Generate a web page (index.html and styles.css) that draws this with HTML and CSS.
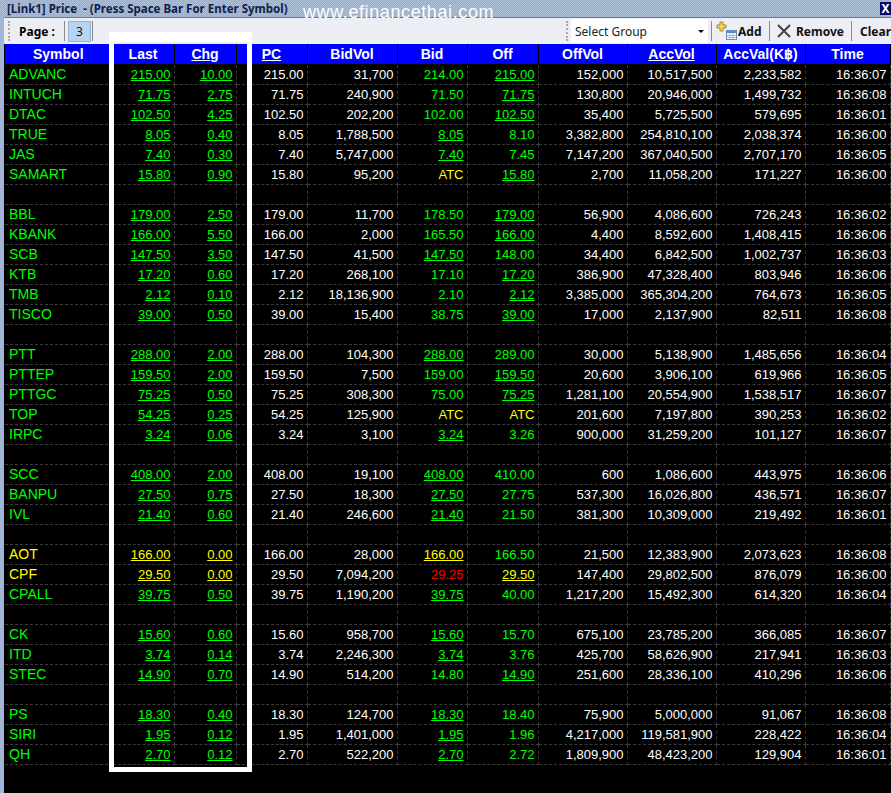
FILE: index.html
```html
<!DOCTYPE html>
<html lang="en">
<head>
    <meta charset="UTF-8">
    <title>Price</title>
    <link rel="stylesheet" href="styles.css">
</head>
<body>
    <div class="window">
        <div class="titlebar">
            <span class="title">[Link1] Price &nbsp;- (Press Space Bar For Enter Symbol)</span>
            <span class="close">X</span>
        </div>
        <div class="toolbar">
            <span class="grip"></span>
            <span class="page-label">Page :</span>
            <span class="sep"></span>
            <span class="page-num">3</span>
            <span class="sep sep-tight"></span>
            <span class="spacer"></span>
            <span class="grip grip-right"></span>
            <span class="group-select"><span>Select Group</span><span class="caret"></span></span>
            <span class="sep"></span>
            <span class="tool tool-add">
                <svg width="22" height="20" viewBox="0 0 22 20">
                    <path d="M4 1h3v3h3v3H7v3H4V7H1V4h3z" fill="#f3d65a" stroke="#a8892a"/>
                    <rect x="10.5" y="9.5" width="10" height="9" fill="#fff" stroke="#6b8fc0"/>
                    <rect x="11" y="10" width="9" height="2" fill="#5d86c4"/>
                    <path d="M11 14.5h9M11 16.5h9M14 12v6M17 12v6" stroke="#9db6d8" fill="none"/>
                </svg>
                Add
            </span>
            <span class="sep"></span>
            <span class="tool tool-remove">
                <svg width="16" height="16" viewBox="0 0 16 16">
                    <path d="M2 2l12 12M14 2L2 14" stroke="#444" stroke-width="2" fill="none"/>
                </svg>
                Remove
            </span>
            <span class="sep"></span>
            <span class="tool tool-clear">Clear</span>
        </div>
        <div class="grid-wrap">
            <table class="grid">
                <thead id="head"></thead>
                <tbody id="rows"></tbody>
            </table>
        </div>
    </div>
    <div class="watermark">www.efinancethai.com</div>
    <div class="highlight"></div>
    <script src="app.js"></script>
</body>
</html>
```

FILE: styles.css
```css
html, body {
    margin: 0;
    padding: 0;
    background: #000;
}
body {
    width: 891px;
    height: 793px;
    overflow: hidden;
    position: relative;
    font-family: "Liberation Sans", Arial, sans-serif;
}
.window {
    height: 793px;
    display: flex;
    flex-direction: column;
    background: #000;
    border-left: 4px solid #a3b5d6;
}
.titlebar {
    height: 17px;
    margin-left: -4px;
    padding-left: 7px;
    display: flex;
    align-items: center;
    justify-content: space-between;
    background: repeating-conic-gradient(#98abd0 0 25%, #aebfd8 0 50%) 0 0 / 2px 2px;
    font-family: "Noto Sans", sans-serif;
    font-size: 11.5px;
    font-weight: bold;
    color: #10204a;
}
.close {
    width: 11px;
    height: 13px;
    background: #0a0a6e;
    color: #fff;
    font-size: 12px;
    line-height: 13px;
    text-align: center;
    overflow: hidden;
}
.toolbar {
    height: 26px;
    display: flex;
    align-items: center;
    border-top: 1px solid #6f7b8c;
    background: repeating-conic-gradient(#f6f5f2 0 25%, #e6e8ee 0 50%) 0 0 / 2px 2px;
    font-family: "Noto Sans", sans-serif;
    font-size: 12px;
    color: #000;
}
.grip {
    width: 2px;
    height: 20px;
    margin: 0 5px 0 4px;
    border-left: 2px dotted #a9a9a9;
}
.page-label {
    width: 42px;
    margin-left: 2px;
    font-weight: bold;
}
.sep {
    width: 1px;
    height: 20px;
    margin: 0 3px;
    background: #8a8a8a;
    flex: none;
}
.sep-tight {
    margin-left: 1px;
}
.page-num {
    width: 23px;
    height: 21px;
    line-height: 19px;
    text-align: center;
    background: #b9d4f0;
    border: 1px solid #8db2dc;
    box-sizing: border-box;
    color: #111;
}
.spacer {
    flex: 1;
}
.grip-right {
    margin: 0 1px 0 0;
}
.group-select {
    width: 137px;
    height: 24px;
    padding: 0 4px 0 4px;
    box-sizing: border-box;
    display: flex;
    align-items: center;
    justify-content: space-between;
    background: #fff;
    color: #222;
}
.caret {
    border: 3px solid transparent;
    border-top: 3px solid #000;
    margin-top: 3px;
}
.tool {
    display: flex;
    align-items: center;
    font-weight: bold;
    color: #111;
}
.tool-add {
    width: 50px;
    gap: 0;
    margin-left: 1px;
}
.tool-remove {
    width: 72px;
    gap: 4px;
    margin-left: 3px;
}
.tool-clear {
    margin-left: 5px;
}
.grid-wrap {
    padding: 0 0 0 1px;
}
.grid {
    border-collapse: collapse;
    table-layout: fixed;
    width: 885px;
    font-size: 13px;
    color: #fff;
}
.grid th {
    height: 20px;
    padding: 0;
    background: #0000ff;
    color: #fff;
    font-size: 14px;
    font-weight: bold;
    text-align: center;
    border-right: 1px solid #000;
    border-bottom: 1px solid #000;
    box-sizing: border-box;
}
.grid td {
    height: 20px;
    padding: 0 3px 0 0;
    text-align: right;
    white-space: nowrap;
    box-sizing: border-box;
    border-right: 1px dashed #3a3a3a;
    border-bottom: 1px dashed #3a3a3a;
}
.grid td:first-child {
    padding: 0 0 0 4px;
    text-align: left;
    font-size: 14px;
}
.link {
    text-decoration: underline;
}
.green { color: #00ff00; }
.yellow { color: #ffff00; }
.red { color: #ff0000; }
.sort {
    text-decoration: underline;
}
.watermark {
    position: absolute;
    left: 303px;
    top: 2px;
    font-size: 18px;
    letter-spacing: 0.6px;
    color: #fff;
}
.highlight {
    position: absolute;
    left: 109px;
    top: 32px;
    width: 143px;
    height: 740px;
    box-sizing: border-box;
    border: 5px solid #fff;
    border-top-width: 10px;
}
```

FILE: app.js
```js
const columns = [
    ['Symbol', 107], ['Last', 62], ['Chg', 62, true], ['PC', 71, true], ['BidVol', 90],
    ['Bid', 70], ['Off', 71], ['OffVol', 89], ['AccVol', 89, true], ['AccVal(K฿)', 89], ['Time', 85]
];

// symbol, last, chg, pc, bidvol, bid, off, offvol, accvol, accval, time
const data = [
    'ADVANC|215.00|10.00|215.00|31,700|214.00|*215.00|152,000|10,517,500|2,233,582|16:36:07',
    'INTUCH|71.75|2.75|71.75|240,900|71.50|*71.75|130,800|20,946,000|1,499,732|16:36:08',
    'DTAC|102.50|4.25|102.50|202,200|102.00|*102.50|35,400|5,725,500|579,695|16:36:01',
    'TRUE|8.05|0.40|8.05|1,788,500|*8.05|8.10|3,382,800|254,810,100|2,038,374|16:36:00',
    'JAS|7.40|0.30|7.40|5,747,000|*7.40|7.45|7,147,200|367,040,500|2,707,170|16:36:05',
    'SAMART|15.80|0.90|15.80|95,200|ATC|*15.80|2,700|11,058,200|171,227|16:36:00',
    '',
    'BBL|179.00|2.50|179.00|11,700|178.50|*179.00|56,900|4,086,600|726,243|16:36:02',
    'KBANK|166.00|5.50|166.00|2,000|165.50|*166.00|4,400|8,592,600|1,408,415|16:36:06',
    'SCB|147.50|3.50|147.50|41,500|*147.50|148.00|34,400|6,842,500|1,002,737|16:36:03',
    'KTB|17.20|0.60|17.20|268,100|17.10|*17.20|386,900|47,328,400|803,946|16:36:06',
    'TMB|2.12|0.10|2.12|18,136,900|2.10|*2.12|3,385,000|365,304,200|764,673|16:36:05',
    'TISCO|39.00|0.50|39.00|15,400|38.75|*39.00|17,000|2,137,900|82,511|16:36:08',
    '',
    'PTT|288.00|2.00|288.00|104,300|*288.00|289.00|30,000|5,138,900|1,485,656|16:36:04',
    'PTTEP|159.50|2.00|159.50|7,500|159.00|*159.50|20,600|3,906,100|619,966|16:36:05',
    'PTTGC|75.25|0.50|75.25|308,300|75.00|*75.25|1,281,100|20,554,900|1,538,517|16:36:07',
    'TOP|54.25|0.25|54.25|125,900|ATC|ATC|201,600|7,197,800|390,253|16:36:02',
    'IRPC|3.24|0.06|3.24|3,100|*3.24|3.26|900,000|31,259,200|101,127|16:36:07',
    '',
    'SCC|408.00|2.00|408.00|19,100|*408.00|410.00|600|1,086,600|443,975|16:36:06',
    'BANPU|27.50|0.75|27.50|18,300|*27.50|27.75|537,300|16,026,800|436,571|16:36:07',
    'IVL|21.40|0.60|21.40|246,600|*21.40|21.50|381,300|10,309,000|219,492|16:36:01',
    '',
    'AOT|166.00|0.00|166.00|28,000|y166.00|166.50|21,500|12,383,900|2,073,623|16:36:08',
    'CPF|29.50|0.00|29.50|7,094,200|r29.25|y29.50|147,400|29,802,500|876,079|16:36:00',
    'CPALL|39.75|0.50|39.75|1,190,200|*39.75|40.00|1,217,200|15,492,300|614,320|16:36:04',
    '',
    'CK|15.60|0.60|15.60|958,700|*15.60|15.70|675,100|23,785,200|366,085|16:36:07',
    'ITD|3.74|0.14|3.74|2,246,300|*3.74|3.76|425,700|58,626,900|217,941|16:36:03',
    'STEC|14.90|0.70|14.90|514,200|14.80|*14.90|251,600|28,336,100|410,296|16:36:06',
    '',
    'PS|18.30|0.40|18.30|124,700|*18.30|18.40|75,900|5,000,000|91,067|16:36:08',
    'SIRI|1.95|0.12|1.95|1,401,000|*1.95|1.96|4,217,000|119,581,900|228,422|16:36:04',
    'QH|2.70|0.12|2.70|522,200|*2.70|2.72|1,809,900|48,423,200|129,904|16:36:01'
];

const yellowSymbols = ['AOT', 'CPF'];

document.getElementById('head').innerHTML = '<tr>' + columns.map(c =>
    `<th style="width:${c[1]}px">${c[2] ? `<span class="sort">${c[0]}</span>` : c[0]}</th>`
).join('') + '</tr>';

function priceCell(value) {
    // * marks a price that equals the last trade, y and r set an explicit colour
    if (value === 'ATC') return '<td class="yellow">ATC</td>';
    if (value[0] === '*') return `<td class="green"><span class="link">${value.slice(1)}</span></td>`;
    if (value[0] === 'y') return `<td class="yellow"><span class="link">${value.slice(1)}</span></td>`;
    if (value[0] === 'r') return `<td class="red">${value.slice(1)}</td>`;
    return `<td class="green">${value}</td>`;
}

document.getElementById('rows').innerHTML = data.map(line => {
    if (!line) return '<tr>' + columns.map(() => '<td></td>').join('') + '</tr>';
    const f = line.split('|');
    const tone = yellowSymbols.includes(f[0]) ? 'yellow' : 'green';
    return '<tr>' +
        `<td class="${tone}">${f[0]}</td>` +
        `<td class="${tone}"><span class="link">${f[1]}</span></td>` +
        `<td class="${tone}"><span class="link">${f[2]}</span></td>` +
        `<td>${f[3]}</td><td>${f[4]}</td>` +
        priceCell(f[5]) + priceCell(f[6]) +
        `<td>${f[7]}</td><td>${f[8]}</td><td>${f[9]}</td><td>${f[10]}</td></tr>`;
}).join('');
```
